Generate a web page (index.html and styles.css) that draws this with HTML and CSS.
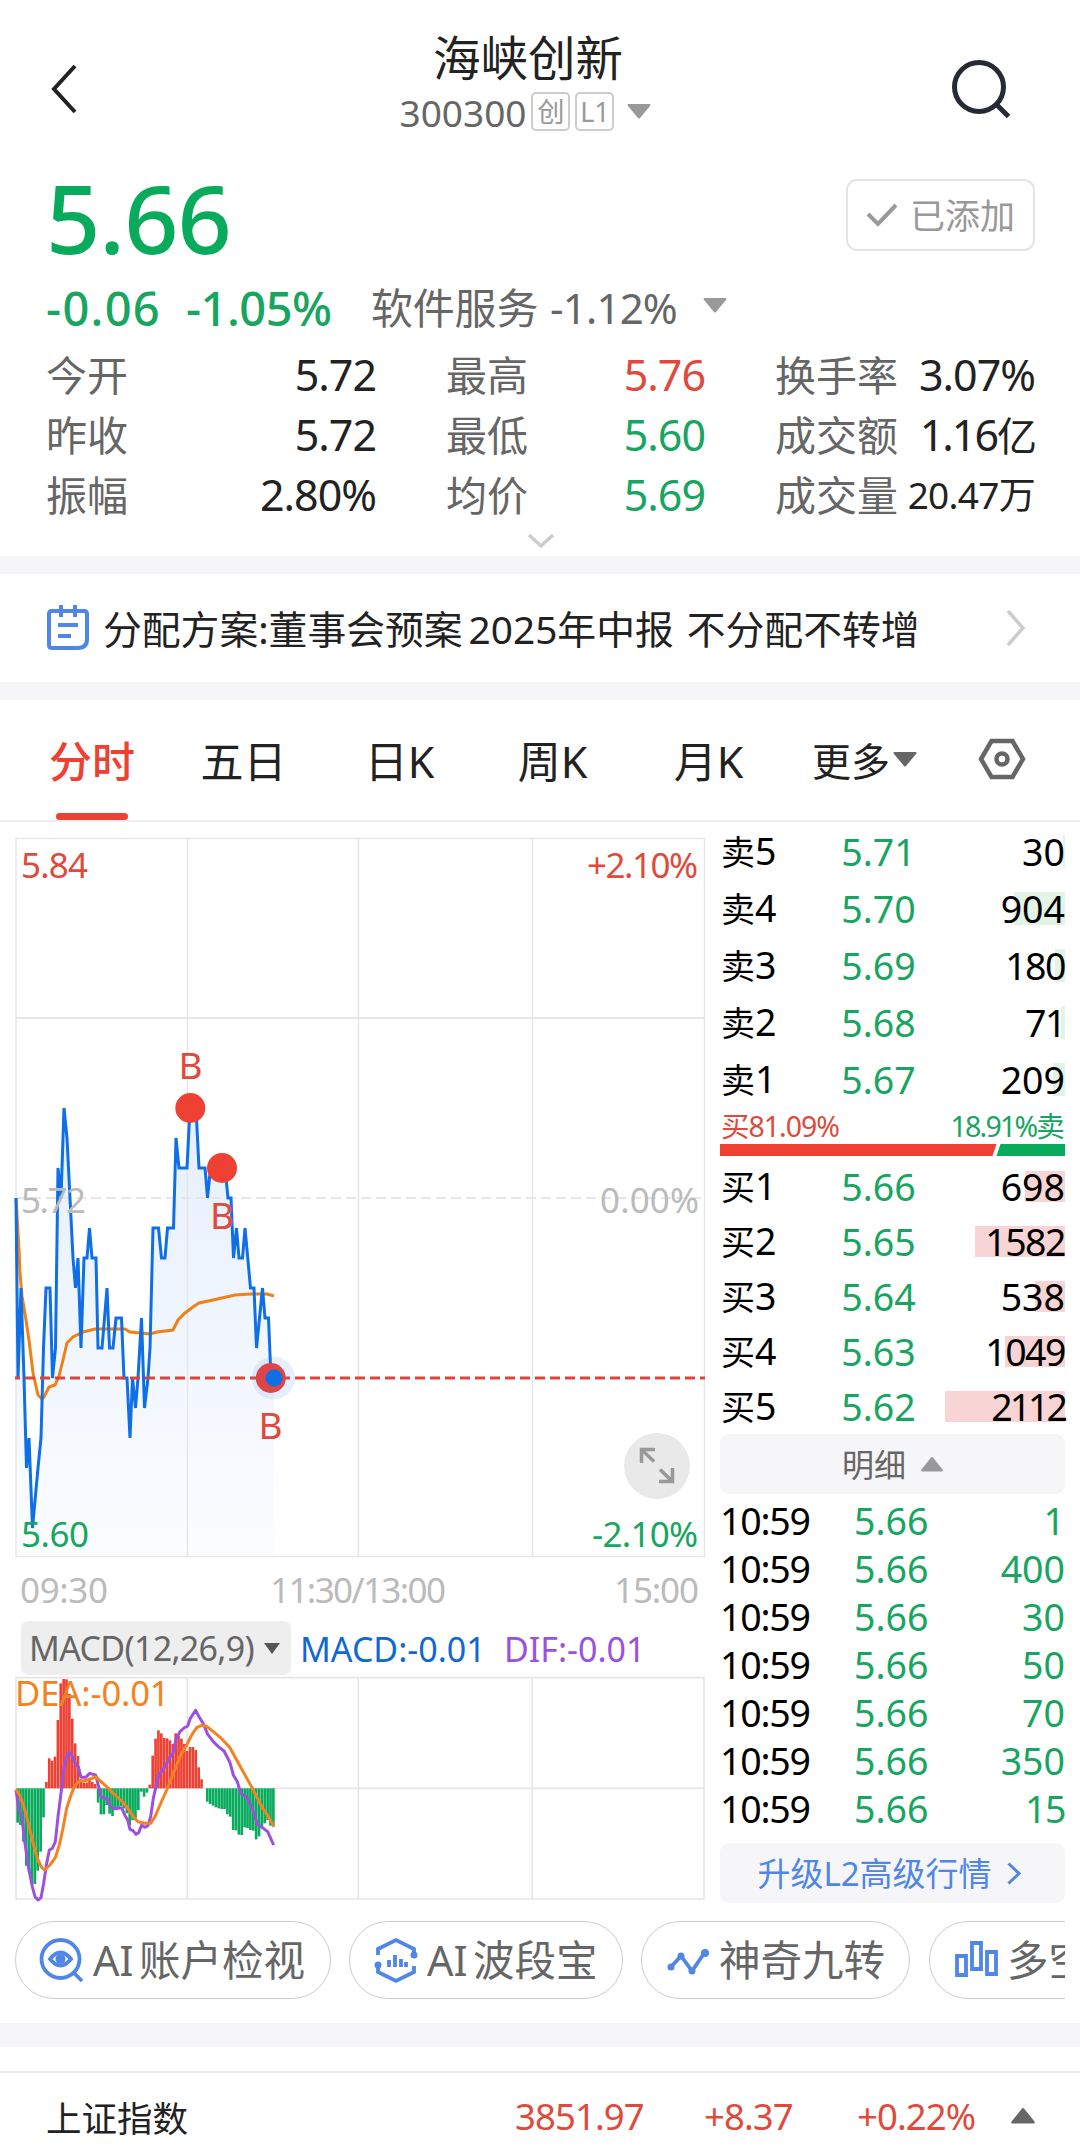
FILE: index.html
```html
<!DOCTYPE html>
<html lang="zh-CN">
<head>
  <meta charset="UTF-8">
  <title>海峡创新 300300</title>
  <meta name="viewport" content="width=device-width, initial-scale=1">
  <link rel="stylesheet" href="styles.css">
</head>
<body>
<div class="page">

  <header class="header">
    <svg class="icon-back" viewBox="0 0 28 50"><path d="M25 2 4 25l21 23"/></svg>
    <div class="header-center">
      <h1 class="stock-name">海峡创新</h1>
      <div class="stock-code">
        <span>300300</span>
        <span class="badge">创</span>
        <span class="badge">L1</span>
        <svg class="tri" viewBox="0 0 24 15"><path d="M1 0h22q1 1 0 2L13 14q-1 1-2 0L1 2q-1-1 0-2z"/></svg>
      </div>
    </div>
    <svg class="icon-search" viewBox="0 0 60 60"><circle cx="27" cy="27" r="24.5"/><path d="m44.500 44.500 12 12"/></svg>
  </header>

  <section class="quote">
    <div class="price-row">
      <div class="price">5.66</div>
      <button class="added">
        <svg viewBox="0 0 32 24"><path d="m2 11 10 10L30 2"/></svg>
        <span>已添加</span>
      </button>
    </div>
    <div class="change-row">
      <span class="change">-0.06</span>
      <span class="change change-pct">-1.05%</span>
      <span class="sector">软件服务</span>
      <span class="sector-pct">-1.12%</span>
      <svg class="tri" viewBox="0 0 24 15"><path d="M1 0h22q1 1 0 2L13 14q-1 1-2 0L1 2q-1-1 0-2z"/></svg>
    </div>
    <div class="stats">
      <div class="stat"><span>今开</span><b>5.72</b></div>
      <div class="stat"><span>最高</span><b class="up">5.76</b></div>
      <div class="stat"><span>换手率</span><b>3.07%</b></div>
      <div class="stat"><span>昨收</span><b>5.72</b></div>
      <div class="stat"><span>最低</span><b class="down">5.60</b></div>
      <div class="stat"><span>成交额</span><b class="tight">1.16<i>亿</i></b></div>
      <div class="stat"><span>振幅</span><b>2.80%</b></div>
      <div class="stat"><span>均价</span><b class="down">5.69</b></div>
      <div class="stat"><span>成交量</span><b class="small">20.47万</b></div>
    </div>
    <svg class="more-arrow" viewBox="0 0 28 15"><path d="m2 2 12 11L26 2"/></svg>
  </section>

  <section class="notice">
    <svg class="notice-icon" viewBox="0 0 42 46">
      <path d="M5 6h32q3 0 3 3v25q0 9-9 9H5q-3 0-3-3V9q0-3 3-3zM14 0v12M28 0v12M11 20h20M11 31h13"/>
    </svg>
    <p class="notice-text"><span>分配方案:董事会预案</span><span class="notice-year">2025年中报</span><span class="notice-plan">不分配不转增</span></p>
    <svg class="notice-arrow" viewBox="0 0 20 38"><path d="m2 2 15 17L2 36"/></svg>
  </section>

  <nav class="tabs">
    <a class="tab active">分时</a>
    <a class="tab">五日</a>
    <a class="tab">日K</a>
    <a class="tab">周K</a>
    <a class="tab tab-month">月K</a>
    <a class="tab tab-more">更多<svg class="tri" viewBox="0 0 24 15"><path d="M1 0h22q1 1 0 2L13 14q-1 1-2 0L1 2q-1-1 0-2z"/></svg></a>
    <svg class="icon-setting" viewBox="0 0 48 44"><path d="M13.500 4h21L45 22 34.500 40h-21L3 22z"/><circle cx="24" cy="22" r="5.500"/></svg>
  </nav>

  <main class="main">
    <div class="chart-col">
      <svg class="price-chart" viewBox="0 822 710 788">
        <defs>
          <linearGradient id="area" x1="0" y1="1108" x2="0" y2="1556" gradientUnits="userSpaceOnUse">
            <stop offset="0" stop-color="#e6effd"/>
            <stop offset="1" stop-color="#fbfdff"/>
          </linearGradient>
        </defs>
        <path fill="url(#area)" d="M16 1198 18 1378 21 1288 24 1378 26.500 1468 29 1438 32.500 1528 38 1468 41 1438 43.500 1348 46 1288H50L52.500 1378 55.500 1348 58 1168 61 1198 64 1108 67 1138 70 1198 73 1258 75.500 1288 78 1258 81 1348 84 1258H87L89.500 1228 92 1258H96L98 1348H102L107 1288 109.500 1348H113L116 1318H121.500L124 1378H127L130 1438 132.500 1378 135.500 1408 138 1378 141.500 1318 144.500 1408 148 1378 150 1348 153 1228H158.500L161.500 1258H165L167.500 1228H173.500L176 1138 179 1168H187L190 1108H196L199 1168H205L207.500 1198 210.500 1168H225L228 1198H231L233.500 1258 236.500 1228 239 1258H242.500L245 1228 250.500 1288H254L256.500 1348 262.500 1288 265 1318H268.500L271 1378H274V1556H16z"/>
        <g class="grid">
          <path d="M16 838.500H704.500V1556.500H16zM187.500 838V1556M358.500 838V1556M532.500 838V1556"/>
          <path class="grid-h" d="M16 1018H704"/>
          <path class="grid-dash" d="M16 1198H704"/>
        </g>
        <path class="avg-line" d="M16 1198 19 1250 20 1273 22 1296 26 1320 29 1340 33 1373 38 1395 42 1399 44 1397 49 1387 55 1385 59 1376 63 1360 67 1343 73 1337 83 1332 95 1329H125L130 1332 150 1334 157 1332 173 1330 178 1320 185 1313 193 1307 199 1303 213 1300 235 1295 250 1294H267L274 1296"/>
        <path class="price-line" d="M16 1198 18 1378 21 1288 24 1378 26.500 1468 29 1438 32.500 1528 38 1468 41 1438 43.500 1348 46 1288H50L52.500 1378 55.500 1348 58 1168 61 1198 64 1108 67 1138 70 1198 73 1258 75.500 1288 78 1258 81 1348 84 1258H87L89.500 1228 92 1258H96L98 1348H102L107 1288 109.500 1348H113L116 1318H121.500L124 1378H127L130 1438 132.500 1378 135.500 1408 138 1378 141.500 1318 144.500 1408 148 1378 150 1348 153 1228H158.500L161.500 1258H165L167.500 1228H173.500L176 1138 179 1168H187L190 1108H196L199 1168H205L207.500 1198 210.500 1168H225L228 1198H231L233.500 1258 236.500 1228 239 1258H242.500L245 1228 250.500 1288H254L256.500 1348 262.500 1288 265 1318H268.500L271 1378"/>
        <path class="now-line" d="M15 1378H705"/>
        <circle cx="273.500" cy="1378" r="21.500" fill="#3b7cf0" fill-opacity=".12"/>
        <g fill="#ee4033">
          <circle cx="190.300" cy="1108" r="15"/>
          <circle cx="222" cy="1168" r="15"/>
          <circle cx="270.800" cy="1378" r="15" fill="#dd4548"/>
        </g>
        <circle cx="274" cy="1378" r="8.500" fill="#0f6fe6"/>
        <g class="mark">
          <text x="178.500" y="1078.500">B</text>
          <text x="210" y="1228.500">B</text>
          <text x="258.500" y="1438.500">B</text>
        </g>
        <g class="axis">
          <text class="t-up" x="21" y="878" textLength="67">5.84</text>
          <text class="t-up" x="587" y="878" textLength="111">+2.10%</text>
          <text x="21" y="1213" textLength="65">5.72</text>
          <text x="600" y="1213" textLength="99">0.00%</text>
          <text class="t-down" x="21" y="1547" textLength="68">5.60</text>
          <text class="t-down" x="592" y="1547" textLength="106">-2.10%</text>
          <text x="20" y="1603" textLength="88">09:30</text>
          <text x="270" y="1603" textLength="176">11:30/13:00</text>
          <text x="614" y="1603" textLength="85">15:00</text>
        </g>
        <circle cx="657" cy="1466" r="33" fill="#e9e9e9"/>
        <path class="expand" d="M641.500 1463V1449.500H655M641.500 1449.500 654 1461.500M672.500 1468V1481.500H659M672.500 1481.500 660 1469.500"/>
      </svg>

      <div class="indicator">
        <button class="indicator-name">MACD(12,26,9)<svg viewBox="0 0 16 11"><path d="M0 0h16L8 11z"/></svg></button>
        <span class="macd">MACD:-0.01</span>
        <span class="dif">DIF:-0.01</span>
      </div>

      <!-- drawn at 3x units, bars are filled in by script.js -->
      <svg class="macd-chart" viewBox="0 15 2130 690">
        <path class="macd-grid" d="M48 23H2112V687H48zM562 23V687M1075 23V687M1597 23V687M48 355H2112"/>
        <g id="bars"></g>
        <polyline class="line dif-line" points="48,360 57,420 65,440 75,520 85,590 97,650 105,680 114,690 123,683 131,640 140,580 148,540 157,535 166,515 174,440 183,370 192,290 200,262 208,247 217,258 226,280 235,290 243,322 257,322 269,310 287,315 296,350 303,380 313,386 322,385 331,408 340,417 365,413 374,435 383,450 390,478 399,482 408,493 416,488 425,465 434,472 444,467 452,440 460,385 470,340 478,312 487,302 500,280 509,262 519,250 528,208 540,185 552,174 563,168 571,145 587,121 597,140 611,163 623,193 640,215 655,230 672,243 690,278 700,315 712,335 722,370 740,382 757,415 772,463 790,475 803,485 821,525"/>
        <polyline class="line dea-line" points="48,358 60,378 70,405 80,440 90,480 102,530 114,570 125,592 134,600 150,585 166,563 178,525 188,480 200,415 213,375 223,350 235,335 262,330 287,321 300,332 320,350 345,375 365,393 380,410 400,440 414,455 435,460 452,460 465,440 480,405 500,360 520,310 540,260 560,225 575,195 590,173 605,166 620,169 640,185 665,206 690,233 710,270 735,315 760,360 785,410 805,440 821,467"/>
        <text class="dea-text" x="45" y="108" textLength="464">DEA:-0.01</text>
      </svg>
    </div>

    <aside class="book">
      <div class="asks">
        <div class="level"><span>卖<em>5</em></span><span class="down">5.71</span><span class="qty"><i style="width:2px"></i>30</span></div>
        <div class="level"><span>卖<em>4</em></span><span class="down">5.70</span><span class="qty"><i style="width:51px"></i>904</span></div>
        <div class="level"><span>卖<em>3</em></span><span class="down">5.69</span><span class="qty tight"><i style="width:10px"></i>180</span></div>
        <div class="level"><span>卖<em>2</em></span><span class="down">5.68</span><span class="qty tight"><i style="width:4px"></i>71</span></div>
        <div class="level"><span>卖<em>1</em></span><span class="down">5.67</span><span class="qty"><i style="width:12px"></i>209</span></div>
      </div>
      <div class="ratio-text"><span class="up">买81.09%</span><span class="down">18.91%卖</span></div>
      <svg class="ratio-bar" viewBox="0 0 345 12"><path fill="#ee4033" d="M0 0h276.500l-4 12H0z"/><path fill="#08ab5b" d="M280.500 0H345v12h-68.500z"/></svg>
      <div class="bids">
        <div class="level"><span>买<em>1</em></span><span class="down">5.66</span><span class="qty"><i style="width:40px"></i>698</span></div>
        <div class="level"><span>买<em>2</em></span><span class="down">5.65</span><span class="qty tight"><i style="width:90px"></i>1582</span></div>
        <div class="level"><span>买<em>3</em></span><span class="down">5.64</span><span class="qty"><i style="width:30px"></i>538</span></div>
        <div class="level"><span>买<em>4</em></span><span class="down">5.63</span><span class="qty tight"><i style="width:60px"></i>1049</span></div>
        <div class="level"><span>买<em>5</em></span><span class="down">5.62</span><span class="qty tighter"><i style="width:120px"></i>2112</span></div>
      </div>
      <button class="book-btn detail-btn">明细<svg viewBox="0 0 22 15"><path d="M12 .5 21.500 12.500q1 2-1 2H1.500q-2 0-1-2L10 .5q1-1 2 0z"/></svg></button>
      <div class="ticks">
        <div class="tick"><span>10:59</span><span>5.66</span><span>1</span></div>
        <div class="tick"><span>10:59</span><span>5.66</span><span>400</span></div>
        <div class="tick"><span>10:59</span><span>5.66</span><span>30</span></div>
        <div class="tick"><span>10:59</span><span>5.66</span><span>50</span></div>
        <div class="tick"><span>10:59</span><span>5.66</span><span>70</span></div>
        <div class="tick"><span>10:59</span><span>5.66</span><span>350</span></div>
        <div class="tick"><span>10:59</span><span>5.66</span><span class="tight">15</span></div>
      </div>
      <button class="book-btn upgrade-btn">升级L2高级行情<svg viewBox="0 0 14 23"><path d="m1.500 1.500 10.500 10-10.500 10"/></svg></button>
    </aside>
  </main>

  <div class="tools">
    <a class="tool tool-1">
      <svg viewBox="0 0 44 44"><circle cx="20.500" cy="21" r="19"/><path d="m34 35 8 8"/><path d="M10 21q10.500-13 21 0-10.500 13-21 0z"/><circle class="fill" cx="20.500" cy="21" r="5"/></svg>
      <span class="latin">AI</span><span>账户检视</span>
    </a>
    <a class="tool tool-2">
      <svg viewBox="0 0 44 44"><path d="M4 17v-6L22 2l18 9v6M4 28v6l18 9 18-9v-6M15 22v7M21 17v12M27 21v8M32 24v5"/><circle class="fill" cx="40" cy="17" r="3.500"/><circle class="fill" cx="4" cy="27" r="3.500"/></svg>
      <span class="latin">AI</span><span>波段宝</span>
    </a>
    <a class="tool tool-3">
      <svg viewBox="0 0 44 44"><path d="M5 29 15 18l11 15L39 14"/><circle class="fill" cx="5" cy="29" r="3.500"/><circle class="fill" cx="15" cy="18" r="3.500"/><circle class="fill" cx="26" cy="33" r="3.500"/><circle class="fill" cx="39" cy="15" r="4"/></svg>
      <span>神奇九转</span>
    </a>
    <a class="tool tool-4">
      <svg viewBox="0 0 44 44"><path d="M3 18h9v19H3zM18 5h9v26h-9zM33 14h9v22h-9z"/></svg>
      <span>多空趋势</span>
    </a>
  </div>

  <footer class="index-bar">
    <span class="index-name">上证指数</span>
    <span class="index-value">3851.97</span>
    <span class="index-change">+8.37</span>
    <span class="index-pct">+0.22%</span>
    <svg viewBox="0 0 24 16"><path d="M13 .5 23.500 13.500q1 2-1 2H1.500q-2 0-1-2L11 .5q1-1 2 0z"/></svg>
  </footer>
</div>

<script src="script.js"></script>
</body>
</html>
```
FILE: styles.css
```css
* {
  box-sizing: border-box;
}

body {
  margin: 0;
  background-color: #fff;
  color: #222;
  font-family: "Noto Sans", "Noto Sans CJK SC", sans-serif;
  overflow: hidden;
}

.page {
  width: 1080px;
  height: 2148px;
  overflow: hidden;
}

svg {
  display: block;
  flex: none;
  overflow: visible;
}

button {
  font-family: inherit;
  border: none;
  padding: 0;
}

i, em {
  font-style: normal;
}

.up {
  color: #e04a3c;
}

.down {
  color: #17a55f;
}

.tri {
  width: 24px;
  height: 15px;
  fill: #999;
}

/* header */
.header {
  display: flex;
  align-items: flex-start;
  justify-content: space-between;
  height: 157px;
  padding: 0 68px 0 50px;
}

.icon-back {
  width: 28px;
  height: 50px;
  margin-top: 64px;
  fill: none;
  stroke: #222;
  stroke-width: 4;
}

.icon-search {
  width: 60px;
  height: 60px;
  margin-top: 60px;
  fill: none;
  stroke: #262a35;
  stroke-width: 5;
}

.header-center {
  display: flex;
  flex-direction: column;
  align-items: center;
  width: 400px;
  margin-left: 26px;
}

.stock-name {
  margin: 27px 0 0;
  font-size: 47.500px;
  line-height: 62px;
  font-weight: 400;
}

.stock-code {
  display: flex;
  align-items: center;
  height: 40px;
  margin-top: 2px;
  margin-left: -5px;
  font-size: 37px;
  line-height: 40px;
  color: #666;
}

.stock-code > span:first-child {
  padding-top: 4px;
}

.stock-code .tri {
  margin-left: 13px;
}

.badge {
  width: 39px;
  height: 39px;
  margin-left: 5px;
  border: 2px solid #ccc;
  border-radius: 5px;
  font-size: 27px;
  line-height: 35px;
  text-align: center;
  color: #999;
}

/* quote */
.quote {
  height: 399px;
  padding: 0 45px 0 46px;
}

.price-row {
  display: flex;
  justify-content: space-between;
  height: 121px;
}

.price {
  font-size: 95px;
  line-height: 120px;
  font-weight: 500;
  letter-spacing: -1px;
  color: #08ab5b;
}

.added {
  display: flex;
  align-items: center;
  justify-content: center;
  gap: 12px;
  width: 189px;
  height: 72px;
  margin-top: 22px;
  border: 2px solid #e4e4e4;
  border-radius: 11px;
  background: #fff;
  font-size: 35px;
  line-height: 50px;
  color: #999;
}

.added span {
  padding-top: 2px;
}

.added svg {
  width: 32px;
  height: 24px;
  fill: none;
  stroke: #999;
  stroke-width: 4;
}

.change-row {
  display: flex;
  align-items: center;
  height: 60px;
  font-size: 42px;
  line-height: 60px;
  color: #666;
}

.change {
  width: 140px;
  font-size: 47px;
  font-weight: 500;
  letter-spacing: 1.300px;
  color: #17a55f;
}

.change-pct {
  width: 185px;
  letter-spacing: -.5px;
}

.sector {
  width: 179px;
  letter-spacing: -.2px;
}

.sector-pct {
  width: 153px;
  letter-spacing: -.8px;
}

.change-row .tri {
  margin-top: -6px;
}

.stats {
  display: grid;
  grid-template-columns: 330px 259px 260px;
  column-gap: 70px;
  grid-template-rows: repeat(3, 60px);
  margin-top: 7px;
  margin-right: -5px;
}

.stat {
  display: flex;
  justify-content: space-between;
  align-items: center;
  font-size: 41px;
  line-height: 60px;
  color: #666;
  white-space: nowrap;
}

.stat b {
  font-size: 43px;
  font-weight: 400;
  letter-spacing: -1px;
  color: #222;
}

.stat b.up {
  color: #e04a3c;
}

.stat b.down {
  color: #17a55f;
}

.stat b i {
  font-size: 40px;
}

.stat b.tight {
  letter-spacing: -2px;
}

.stat b.small {
  font-size: 37px;
  letter-spacing: -.7px;
}

.more-arrow {
  width: 28px;
  height: 15px;
  margin: 8px auto 0;
  fill: none;
  stroke: #ccc;
  stroke-width: 3.500;
}

/* notice */
.notice {
  display: flex;
  align-items: center;
  height: 144px;
  padding: 0 54px 0 47px;
  border-top: 18px solid #f6f6f9;
  border-bottom: 18px solid #f6f6f9;
}

.notice-icon {
  width: 42px;
  height: 46px;
  fill: none;
  stroke: #4f86e8;
  stroke-width: 4;
}

.notice-text {
  display: flex;
  flex: 1;
  margin: 0 0 0 14px;
  padding-top: 2px;
  font-size: 38.800px;
  line-height: 54px;
}

.notice-year {
  margin-left: 6px;
}

.notice-plan {
  margin-left: 13px;
}

.notice-arrow {
  width: 20px;
  height: 38px;
  fill: none;
  stroke: #ccc;
  stroke-width: 3.500;
}

/* tabs */
.tabs {
  display: grid;
  grid-template-columns: 184px 119px 193px 113px 183px 131px 157px;
  align-items: center;
  height: 122px;
  border-bottom: 2px solid #eee;
  font-size: 43px;
}

.tab {
  position: relative;
  line-height: 120px;
  padding-top: 2px;
  height: 120px;
  text-align: center;
}

.tab.active {
  color: #ee4033;
  font-weight: 500;
}

.tab.active::after {
  content: "";
  position: absolute;
  left: 56px;
  bottom: 0;
  width: 72px;
  height: 7px;
  border-radius: 4px;
  background: #ee4033;
}

.tab-month {
  padding-left: 16px;
}

.tab-more {
  display: flex;
  align-items: center;
  gap: 3px;
  padding-left: 20px;
  font-size: 39px;
}

.tab-more .tri {
  fill: #666;
  margin-top: -4px;
}

.icon-setting {
  width: 48px;
  height: 44px;
  margin-left: 55px;
  margin-top: -2px;
  fill: none;
  stroke: #666;
  stroke-width: 4.500;
}

/* charts */
.main {
  display: flex;
  height: 1088px;
}

.chart-col {
  width: 710px;
}

.price-chart {
  width: 710px;
  height: 788px;
}

.grid path {
  fill: none;
  stroke: #e6e6e8;
  stroke-width: 1.500;
}

.grid .grid-h {
  stroke-width: 2;
}

.grid .grid-dash {
  stroke-width: 2;
  stroke-dasharray: 10 5;
}

.avg-line {
  fill: none;
  stroke: #f08018;
  stroke-width: 3;
}

.price-line {
  fill: none;
  stroke: #0f6fe6;
  stroke-width: 3;
}

.now-line {
  stroke: #dd453c;
  stroke-width: 3;
  stroke-dasharray: 10 5;
  stroke-dashoffset: 5;
}

.mark text {
  font-size: 37px;
  fill: #e04a3c;
}

.axis text {
  font-size: 35px;
  fill: #bbb;
}

.axis .t-up {
  fill: #e04a3c;
}

.axis .t-down {
  fill: #17a55f;
}

.expand {
  fill: none;
  stroke: #999;
  stroke-width: 3.500;
}

.indicator {
  display: flex;
  align-items: flex-start;
  height: 65px;
  padding: 11px 0 0 21px;
  font-size: 34px;
  line-height: 56px;
  white-space: nowrap;
}

.indicator-name {
  display: flex;
  align-items: center;
  gap: 10px;
  width: 270px;
  height: 54px;
  padding-left: 8px;
  border-radius: 7px;
  background: #eee;
  color: #666;
  font-size: 34px;
  line-height: 56px;
  letter-spacing: -.7px;
}

.indicator-name svg {
  width: 16px;
  height: 11px;
  fill: #555;
}

.macd {
  margin-left: 9px;
  width: 204px;
  color: #1069cf;
}

.dif {
  color: #9b51e0;
}

.macd-chart {
  width: 710px;
  height: 230px;
}

.macd-grid {
  fill: none;
  stroke: #e6e6e8;
  stroke-width: 5;
}

.bar-up {
  fill: #ee4033;
}

.bar-down {
  fill: #08ab5b;
}

.line {
  fill: none;
  stroke-width: 9;
  stroke-linejoin: round;
}

.dif-line {
  stroke: #9b51e0;
}

.dea-line {
  stroke: #f58220;
}

.dea-text {
  font-size: 104px;
  fill: #f58220;
}

/* order book */
.book {
  width: 345px;
  margin-left: 10px;
  color: #000;
}

.asks {
  padding-top: 1px;
}

.level {
  display: grid;
  grid-template-columns: 102px 113px 130px;
  height: 57px;
  align-items: center;
  font-size: 37.500px;
  line-height: 50px;
}

.level > span:first-child {
  padding-left: 1px;
  font-size: 34px;
}

.level em {
  font-size: 37.500px;
}

.level .down {
  text-align: center;
}

.qty {
  position: relative;
  text-align: right;
}

.qty i {
  position: absolute;
  z-index: -1;
  right: 0;
  top: 8px;
  height: 33px;
  background: #e3f3e5;
}

.qty.tight,
.tick .tight {
  letter-spacing: -1.500px;
}

.qty.tighter {
  letter-spacing: -3px;
}

.bids .level {
  height: 55px;
}

.bids .qty i {
  top: 9px;
  height: 31px;
  background: #f8d5d4;
}

.ratio-text {
  display: flex;
  justify-content: space-between;
  height: 36px;
  padding: 0 2px 0 1px;
  font-size: 28.500px;
  line-height: 37px;
  letter-spacing: -1px;
}

.ratio-text .down {
  letter-spacing: -1.800px;
}

.ratio-bar {
  width: 345px;
  height: 12px;
}

.bids {
  padding-top: 3px;
}

.book-btn {
  display: flex;
  align-items: center;
  justify-content: center;
  width: 345px;
  height: 60px;
  padding-top: 2px;
  border-radius: 9px;
  background: #f6f6f9;
  font-size: 32px;
  line-height: 44px;
  color: #666;
}

.detail-btn svg {
  width: 22px;
  height: 15px;
  margin-top: -2px;
  margin-left: 15px;
  fill: #999;
}

.ticks {
  padding-top: 3px;
}

.tick {
  display: grid;
  grid-template-columns: 134px 80px 131px;
  height: 48px;
  font-size: 37.500px;
  line-height: 48px;
  color: #17a55f;
}

.tick span:first-child {
  color: #000;
  letter-spacing: -1.200px;
}

.tick span:last-child {
  text-align: right;
}

.upgrade-btn {
  margin-top: 10px;
  padding-right: 7px;
  font-size: 33px;
  color: #4f86e8;
}

.upgrade-btn svg {
  width: 14px;
  height: 23px;
  margin-left: 15px;
  margin-top: -2px;
  fill: none;
  stroke: #4f86e8;
  stroke-width: 3;
}

/* tool pills */
.tools {
  display: flex;
  height: 113px;
  width: 1065px;
  padding: 11px 0 0 15px;
  overflow: hidden;
}

.tool {
  display: flex;
  flex: none;
  align-items: center;
  height: 78px;
  padding-left: 24px;
  margin-right: 18px;
  border: 1.500px solid #ccc;
  border-radius: 40px;
  font-size: 41.500px;
  line-height: 60px;
  color: #666;
  white-space: nowrap;
}

.tool-1 { width: 316px; }
.tool-2 { width: 274px; }
.tool-3 { width: 269px; margin-right: 19px; }
.tool-4 { width: 270px; }

.tool svg {
  width: 44px;
  height: 44px;
  margin-right: 9px;
  fill: none;
  stroke: #4f86e8;
  stroke-width: 3.800;
}

.tool svg .fill {
  fill: #4f86e8;
  stroke: none;
}

.latin {
  width: 46px;
}

/* bottom index bar */
.index-bar {
  display: grid;
  grid-template-columns: 469px 189px 153px 154px 24px;
  align-items: center;
  height: 125px;
  padding: 37px 0 0 46px;
  border-top: 24px solid #f6f6f9;
  font-size: 36.500px;
  letter-spacing: -.9px;
  color: #e04a3c;
  position: relative;
}

.index-bar::before {
  content: "";
  position: absolute;
  left: 0;
  right: 0;
  top: 24px;
  height: 2px;
  background: #ebebeb;
}

.index-name {
  font-size: 35.500px;
  letter-spacing: 0;
  color: #222;
}

.index-bar svg {
  width: 24px;
  height: 16px;
  fill: #666;
}
```
FILE: script.js
```js
// one bar per minute, 09:30 - 10:59, positive is above the zero line
var data = [
  -103, -110, -160, -232, -250, -287, -287, -247, -190, -87,
  19, 90, 83, 95, 205, 315, 328, 327, 283, 209, 135, 97, 27, 17, 17, 27, 19, 13,
  -43, -78, -78, -50, -76, -83, -63, -57, -53, -60, -75, -110, -95, -93, -65, -10, -25, -13,
  11, 98, 149, 174, 165, 151, 150, 144, 133, 165, 158, 149, 133, 112, 124, 124, 115, 63, 27, 0,
  -40, -47, -52, -57, -60, -62, -62, -78, -85, -125, -126, -139, -140, -117,
  -119, -125, -127, -153, -144, -117, -105, -95, -112, -115
];

var group = document.getElementById("bars");
var zero = 355;
var step = 8.62;

data.forEach(function (value, i) {
  var rect = document.createElementNS("http://www.w3.org/2000/svg", "rect");
  rect.setAttribute("x", 49 + i * step);
  rect.setAttribute("y", value > 0 ? zero - value : zero);
  rect.setAttribute("width", step - 0.7);
  rect.setAttribute("height", Math.abs(value));
  rect.setAttribute("class", value > 0 ? "bar-up" : "bar-down");
  group.appendChild(rect);
});
```
